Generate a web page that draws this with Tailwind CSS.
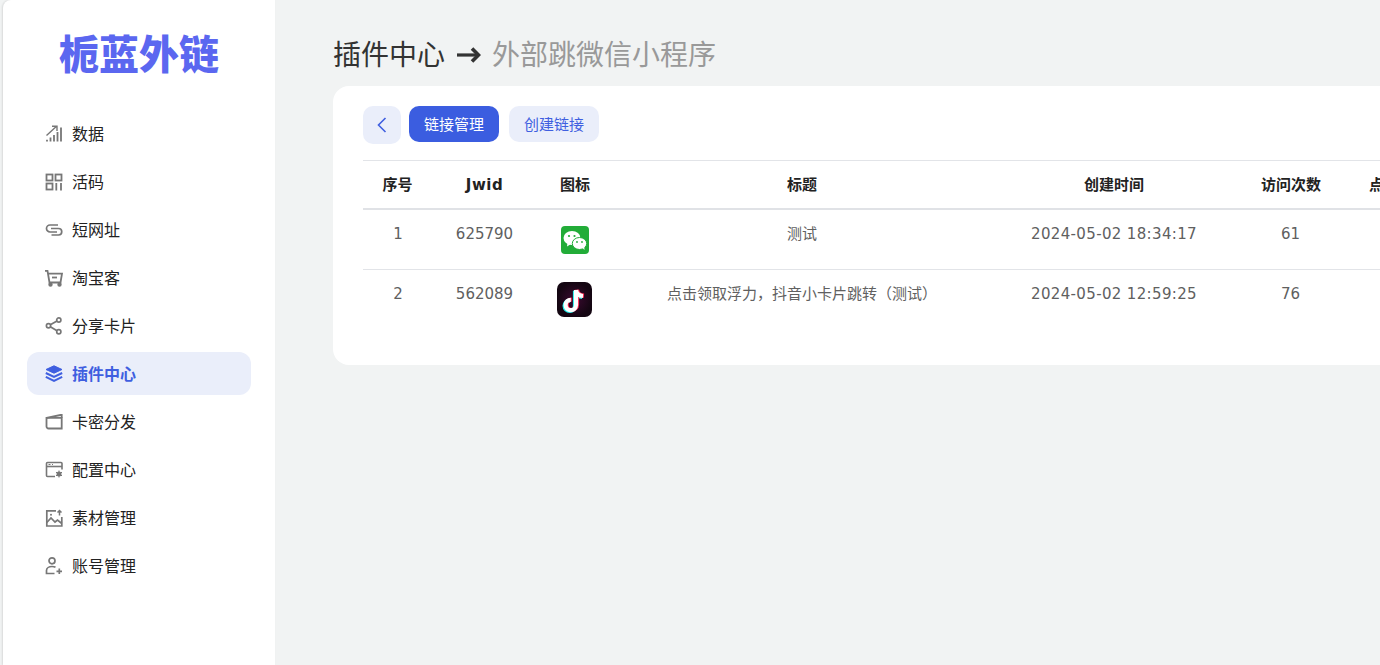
<!DOCTYPE html>
<html lang="zh-CN">
<head>
<meta charset="utf-8">
<script src="https://cdn.jsdelivr.net/npm/@tailwindcss/browser@4"></script>
</head>
<body class="m-0 h-[665px] w-[1380px] overflow-hidden bg-[#f1f3f3] font-['DejaVu_Sans','Noto_Sans_CJK_SC',sans-serif]">
<div class="flex h-[665px] w-[1380px] pl-[3px]">
  <aside class="h-full w-[272px] shrink-0 rounded-tl-lg bg-white shadow-[-1px_0_2px_rgba(0,0,0,0.1)]">
    <div class="flex h-[112px] items-start justify-center pt-[31px] text-[40px] leading-[48px] font-black text-[#5b67f0]">栀蓝外链</div>
    <nav class="flex flex-col gap-[5px] pl-[24px] pr-[24px] text-[16px] text-[#222]">
      <a class="flex h-[43px] items-center gap-[8px] rounded-xl pl-[17px]">
        <svg class="h-5 w-5" viewBox="0 0 20 20" fill="none" stroke="#777" stroke-width="1.800"><path d="M3 17.500v-1.800M6.500 17.500v-4M10 17.500v-6.500M13.500 17.500V8M17 17.500V3.500"/><path d="M2.500 11.500 12 2.800M8 2.200h5V7" stroke-width="1.400"/></svg>
        <span class="mt-[2px]">数据</span>
      </a>
      <a class="flex h-[43px] items-center gap-[8px] rounded-xl pl-[17px]">
        <svg class="h-5 w-5" viewBox="0 0 20 20" fill="none" stroke="#777" stroke-width="1.800"><rect x="2.500" y="2.500" width="6" height="6"/><rect x="11.500" y="2.500" width="6" height="6"/><rect x="2.500" y="11.500" width="6" height="6"/><path d="M12.300 11v7.500M17 11v7.500"/></svg>
        <span class="mt-[2px]">活码</span>
      </a>
      <a class="flex h-[43px] items-center gap-[8px] rounded-xl pl-[17px]">
        <svg class="h-5 w-5" viewBox="0 0 20 20" fill="none" stroke="#777" stroke-width="1.700"><path d="M14 5H6a3.500 3.500 0 0 0 0 7h7"/><path d="M7 8.500h7.500a3.200 3.200 0 0 1 0 6.500H7.500"/></svg>
        <span class="mt-[2px]">短网址</span>
      </a>
      <a class="flex h-[43px] items-center gap-[8px] rounded-xl pl-[17px]">
        <svg class="h-5 w-5" viewBox="0 0 20 20" fill="none" stroke="#777" stroke-width="1.800"><path d="M1 2.800h2.500L5.500 14.500h11L18 5.700H4"/><path d="M8 9.500h5"/><circle cx="6.500" cy="16.500" r="1.300" fill="#777"/><circle cx="15.500" cy="16.500" r="1.300" fill="#777"/></svg>
        <span class="mt-[2px]">淘宝客</span>
      </a>
      <a class="flex h-[43px] items-center gap-[8px] rounded-xl pl-[17px]">
        <svg class="h-5 w-5" viewBox="0 0 20 20" fill="none" stroke="#777" stroke-width="1.700"><circle cx="4.500" cy="9.800" r="2.100"/><circle cx="14.800" cy="4" r="2.100"/><circle cx="14.800" cy="15.800" r="2.100"/><path d="M6.300 8.800 13 5M6.300 10.800l6.700 4"/></svg>
        <span class="mt-[2px]">分享卡片</span>
      </a>
      <a class="flex h-[43px] items-center gap-[8px] rounded-xl bg-[#eaeefa] pl-[17px] font-bold text-[#3f5fe0]">
        <svg class="h-5 w-5" viewBox="0 0 20 20" fill="none" stroke="#3f5fe0"><path d="M10 1.800 18 5.500 10 9.200 2 5.500Z" fill="#3f5fe0" stroke-width="1"/><path d="M1.800 9 10 12.800 18.200 9" stroke-width="2"/><path d="M1.800 12.800 10 16.800 18.200 12.800" stroke-width="2"/></svg>
        <span class="mt-[2px]">插件中心</span>
      </a>
      <a class="flex h-[43px] items-center gap-[8px] rounded-xl pl-[17px]">
        <svg class="h-5 w-5" viewBox="0 0 20 20" fill="none" stroke="#777" stroke-width="1.800"><path d="M2.500 5.800h15.200v10.700H4.500a2 2 0 0 1-2-2Z"/><path d="M2.500 5.800 16.500 3h1.200v2.800"/></svg>
        <span class="mt-[2px]">卡密分发</span>
      </a>
      <a class="flex h-[43px] items-center gap-[8px] rounded-xl pl-[17px]">
        <svg class="h-5 w-5" viewBox="0 0 20 20" fill="none" stroke="#777" stroke-width="1.600"><path d="M11 16.500H3.500a1 1 0 0 1-1-1V3.500a1 1 0 0 1 1-1h13.500a1 1 0 0 1 1 1v6"/><path d="M2.500 6.500h15.500"/><path d="M4.500 4.500h2M8 4.500h1" stroke-width="1"/><circle cx="15" cy="14" r="2.500" fill="#777" stroke="none"/><path d="M15 10.500v7M12 12.200l6 3.600M18 12.200l-6 3.600" stroke-width="1"/></svg>
        <span class="mt-[2px]">配置中心</span>
      </a>
      <a class="flex h-[43px] items-center gap-[8px] rounded-xl pl-[17px]">
        <svg class="h-5 w-5" viewBox="0 0 20 20" fill="none" stroke="#777" stroke-width="1.700"><path d="M12 2.800H2.800V18h15V9"/><path d="M2.800 14.500 7 10l4 4 2.500-2 4.300 3.500"/><circle cx="7" cy="6.800" r="1" fill="#777" stroke="none"/><path d="M15.500 7.500V2.500M13.500 4.500l2-2 2 2" stroke-width="1.500"/></svg>
        <span class="mt-[2px]">素材管理</span>
      </a>
      <a class="flex h-[43px] items-center gap-[8px] rounded-xl pl-[17px]">
        <svg class="h-5 w-5" viewBox="0 0 20 20" fill="none" stroke="#777" stroke-width="1.700"><circle cx="8" cy="4.800" r="3"/><path d="M11.500 11.300c-1-.6-2.200-.8-3.500-.8-3 0-5.500 1.600-5.500 4v3h8"/><path d="M15.300 12.500v5.500M12.500 15.300H18"/></svg>
        <span class="mt-[2px]">账号管理</span>
      </a>
    </nav>
  </aside>
  <main class="min-w-0 flex-1 overflow-hidden pl-[58px]">
    <h1 class="flex h-[86px] items-start pt-[36px] text-[28px] leading-[40px] font-normal whitespace-nowrap text-[#333]">
      <span>插件中心</span>
      <svg class="ml-[12px] mr-[11px] mt-[9px] h-[20px] w-[24px]" viewBox="0 0 24 20" fill="none" stroke="#333"><path d="M0 10h21" stroke-width="3.200"/><path d="M15 3.500l6.500 6.500-6.500 6.500" stroke-width="3.600"/></svg>
      <span class="text-[#999]">外部跳微信小程序</span>
    </h1>
    <section class="h-[279px] w-[1200px] rounded-2xl bg-white pl-[30px] pt-[20px]">
      <div class="flex h-[54px] items-start">
        <button class="flex h-[38px] w-[38px] items-center justify-center rounded-[10px] bg-[#eaeefa]">
          <svg class="h-[18px] w-[18px]" viewBox="0 0 18 18" fill="none" stroke="#3f5fe0" stroke-width="1.600"><path d="M12.500 2 5.500 9l7 7"/></svg>
        </button>
        <button class="ml-[8px] h-[36px] w-[90px] rounded-[10px] bg-[#3b5de0] pt-[2px] text-[15px] text-white">链接管理</button>
        <button class="ml-[10px] h-[36px] w-[90px] rounded-[10px] bg-[#eaeefa] pt-[2px] text-[15px] text-[#3f5fe0]">创建链接</button>
      </div>
      <table class="w-[1089px] table-fixed border-collapse text-center text-[15px] text-[#606060]">
        <colgroup>
          <col class="w-[68px]"><col class="w-[107px]"><col class="w-[74px]"><col class="w-[380px]"><col class="w-[244px]"><col class="w-[110px]"><col class="w-[106px]">
        </colgroup>
        <thead>
          <tr class="h-[48px] border-t border-b-2 border-t-[#e2e4e8] border-b-[#e0e2e6] font-bold text-[#222]">
            <th class="pl-[1px] pt-[2px]">序号</th><th class="pt-[2px] tracking-[0.5px]">Jwid</th><th class="pt-[2px]">图标</th><th class="pt-[2px]">标题</th><th class="pt-[2px]">创建时间</th><th class="pt-[2px]">访问次数</th><th class="pt-[2px]">点击次数</th>
          </tr>
        </thead>
        <tbody>
          <tr class="h-[61px] border-b border-[#e2e4e8] align-top">
            <td class="pl-[2px] pt-[13px]">1</td>
            <td class="pt-[13px]">625790</td>
            <td class="pt-[16px]">
              <svg class="mx-auto h-[28px] w-[28px]" viewBox="0 0 28 28"><rect width="28" height="28" rx="4" fill="#22ac38"/><ellipse cx="11" cy="12" rx="8.500" ry="7" fill="#fff"/><path d="M6.500 16.500 6 20.500l4-2.500Z" fill="#fff"/><ellipse cx="18.500" cy="17.500" rx="7.200" ry="6" fill="#fff" stroke="#22ac38" stroke-width="1"/><path d="M21.500 22l2 2-.3-3.500Z" fill="#fff"/><circle cx="8" cy="10" r="1.100" fill="#22ac38"/><circle cx="13.500" cy="10" r="1.100" fill="#22ac38"/><circle cx="16" cy="16" r=".9" fill="#22ac38"/><circle cx="21" cy="16" r=".9" fill="#22ac38"/></svg>
            </td>
            <td class="pt-[13px]">测试</td>
            <td class="pt-[13px] tracking-[0.35px]">2024-05-02 18:34:17</td>
            <td class="pr-[1px] pt-[13px]">61</td>
            <td></td>
          </tr>
          <tr class="h-[60px] align-top">
            <td class="pl-[2px] pt-[13px]">2</td>
            <td class="pt-[13px]">562089</td>
            <td class="pr-[2px] pt-[12px]">
              <svg class="mx-auto h-[35px] w-[35px]" viewBox="0 0 35 35"><defs><radialGradient id="tk"><stop offset="0" stop-color="#3a0a30"/><stop offset="1" stop-color="#140612"/></radialGradient></defs><rect width="35" height="35" rx="7" fill="url(#tk)"/><g fill="none" stroke-width="4.200"><path d="M19 8v15a5.200 5.200 0 1 1-5.200-5.200M19 8c.5 3.500 3 5.800 7 6" stroke="#25f4ee" transform="translate(-1 .8)"/><path d="M19 8v15a5.200 5.200 0 1 1-5.200-5.200M19 8c.5 3.500 3 5.800 7 6" stroke="#fe2c55" transform="translate(1 -.3)"/><path d="M19 8v15a5.200 5.200 0 1 1-5.200-5.200M19 8c.5 3.500 3 5.800 7 6" stroke="#fff"/></g></svg>
            </td>
            <td class="pt-[13px] whitespace-nowrap">点击领取浮力，抖音小卡片跳转（测试）</td>
            <td class="pt-[13px] tracking-[0.35px]">2024-05-02 12:59:25</td>
            <td class="pr-[1px] pt-[13px]">76</td>
            <td></td>
          </tr>
        </tbody>
      </table>
    </section>
  </main>
</div>
</body>
</html>
